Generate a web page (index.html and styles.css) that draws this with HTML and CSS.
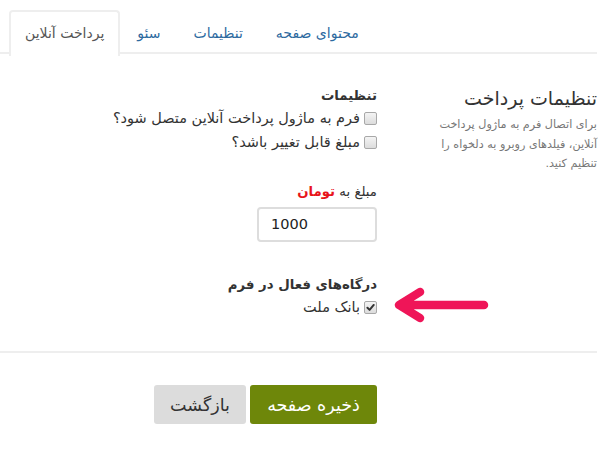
FILE: index.html
```html
<!DOCTYPE html>
<html lang="fa">
<head>
<meta charset="utf-8">
<link rel="stylesheet" href="styles.css">
</head>
<body>
<div class="page" dir="rtl">
  <ul class="tabs">
    <li class="tab"><a>محتوای صفحه</a></li>
    <li class="tab"><a>تنظیمات</a></li>
    <li class="tab"><a>سئو</a></li>
    <li class="tab active"><a>پرداخت آنلاین</a></li>
  </ul>

  <div class="content">
    <div class="side">
      <h3 class="side-title">تنظیمات پرداخت</h3>
      <p class="side-desc">برای اتصال فرم به ماژول پرداخت آنلاین، فیلدهای روبرو به دلخواه را تنظیم کنید.</p>
    </div>
    <div class="main">
      <div class="group">
        <div class="group-title">تنظیمات</div>
        <label class="check"><span class="box"></span>فرم به ماژول پرداخت آنلاین متصل شود؟</label>
        <label class="check"><span class="box"></span>مبلغ قابل تغییر باشد؟</label>
      </div>

      <div class="field">
        <div class="field-label">مبلغ به <span class="red">تومان</span></div>
        <div class="input">1000</div>
      </div>

      <div class="group gateways">
        <div class="group-title">درگاه‌های فعال در فرم</div>
        <div class="gw-row">
          <label class="check"><span class="box checked"><svg viewBox="0 0 10 10" width="9" height="9"><path d="M1.6 5.2 L4 7.6 L8.6 2.2" fill="none" stroke="#333" stroke-width="2.2" stroke-linecap="round" stroke-linejoin="round"/></svg></span>بانک ملت</label>
          <svg class="arrow" width="100" height="40" viewBox="0 0 100 40"><path d="M95 18 H11 M31 5 L10 18 L31 31" fill="none" stroke="#ef1558" stroke-width="8.5" stroke-linecap="round" stroke-linejoin="round"/></svg>
        </div>
      </div>
    </div>
  </div>

  <div class="sep"></div>

  <div class="actions">
    <button class="btn save">ذخیره صفحه</button>
    <button class="btn back">بازگشت</button>
  </div>
</div>
</body>
</html>
```

FILE: styles.css
```css
html, body {
  margin: 0;
  padding: 0;
  background: #fff;
}
body {
  font-family: "DejaVu Sans", "Noto Sans", sans-serif;
  color: #333;
}
.page {
  width: 597px;
  direction: rtl;
}
.tabs {
  list-style: none;
  margin: 0;
  padding: 10px 0 0 8px;
  display: flex;
  justify-content: flex-end;
  border-bottom: 2px solid #eee;
  height: 42px;
  box-sizing: content-box;
}
.tab {
  margin-left: 1px;
  margin-bottom: -2px;
}
.tab a {
  display: block;
  padding: 0 14px;
  height: 42px;
  line-height: 42px;
  font-size: 14px;
  color: #2d6a9f;
  border: 2px solid transparent;
  border-bottom: none;
  border-radius: 4px 4px 0 0;
}
.tab.active a {
  color: #555;
  background: #fff;
  border-color: #eee;
  height: 44px;
}
.content {
  display: flex;
  padding-top: 32px;
}
.side {
  width: 160px;
  padding-left: 60px;
}
.side-title {
  margin: 0;
  font-size: 19px;
  font-weight: normal;
  color: #333;
  line-height: 24px;
}
.side-desc {
  margin: 5px 0 0;
  font-size: 11.2px;
  line-height: 19.5px;
  color: #777;
}
.main {
  flex: 1;
}
.group-title {
  font-size: 13.3px;
  font-weight: bold;
  line-height: 20px;
  margin-bottom: 0;
}
.check {
  display: flex;
  align-items: center;
  font-size: 14.5px;
  line-height: 24px;
  color: #333;
}
.box {
  width: 11px;
  height: 11px;
  border: 1px solid #a8a8a8;
  border-radius: 2px;
  background: linear-gradient(#f4f4f4, #dcdcdc);
  margin-left: 4px;
  display: flex;
  align-items: center;
  justify-content: center;
}
.field {
  margin-top: 28px;
}
.field-label {
  font-size: 13.3px;
  line-height: 20px;
}
.red {
  color: #e8141c;
  font-weight: bold;
}
.input {
  margin-top: 5px;
  width: 92px;
  height: 31px;
  border: 2px solid #ddd;
  border-radius: 4px;
  direction: ltr;
  padding: 0 12px;
  line-height: 31px;
  font-size: 14.5px;
  color: #222;
}
.gateways {
  margin-top: 33px;
}
.gw-row {
  position: relative;
  display: flex;
  align-items: center;
}
.arrow {
  position: absolute;
  right: -112px;
  top: -8px;
}
.sep {
  margin-top: 32px;
  border-top: 2px solid #eee;
}
.actions {
  display: flex;
  padding: 32px 220px 0 0;
  gap: 4px;
}
.btn {
  font-family: "DejaVu Sans", sans-serif;
  font-size: 17.5px;
  height: 39px;
  border: none;
  border-radius: 3px;
  padding: 0 10px;
  cursor: pointer;
}
.save {
  background: #6e870a;
  color: #fff;
  width: 127px;
}
.back {
  background: #dcdcdc;
  color: #333;
  width: 92px;
}
```
